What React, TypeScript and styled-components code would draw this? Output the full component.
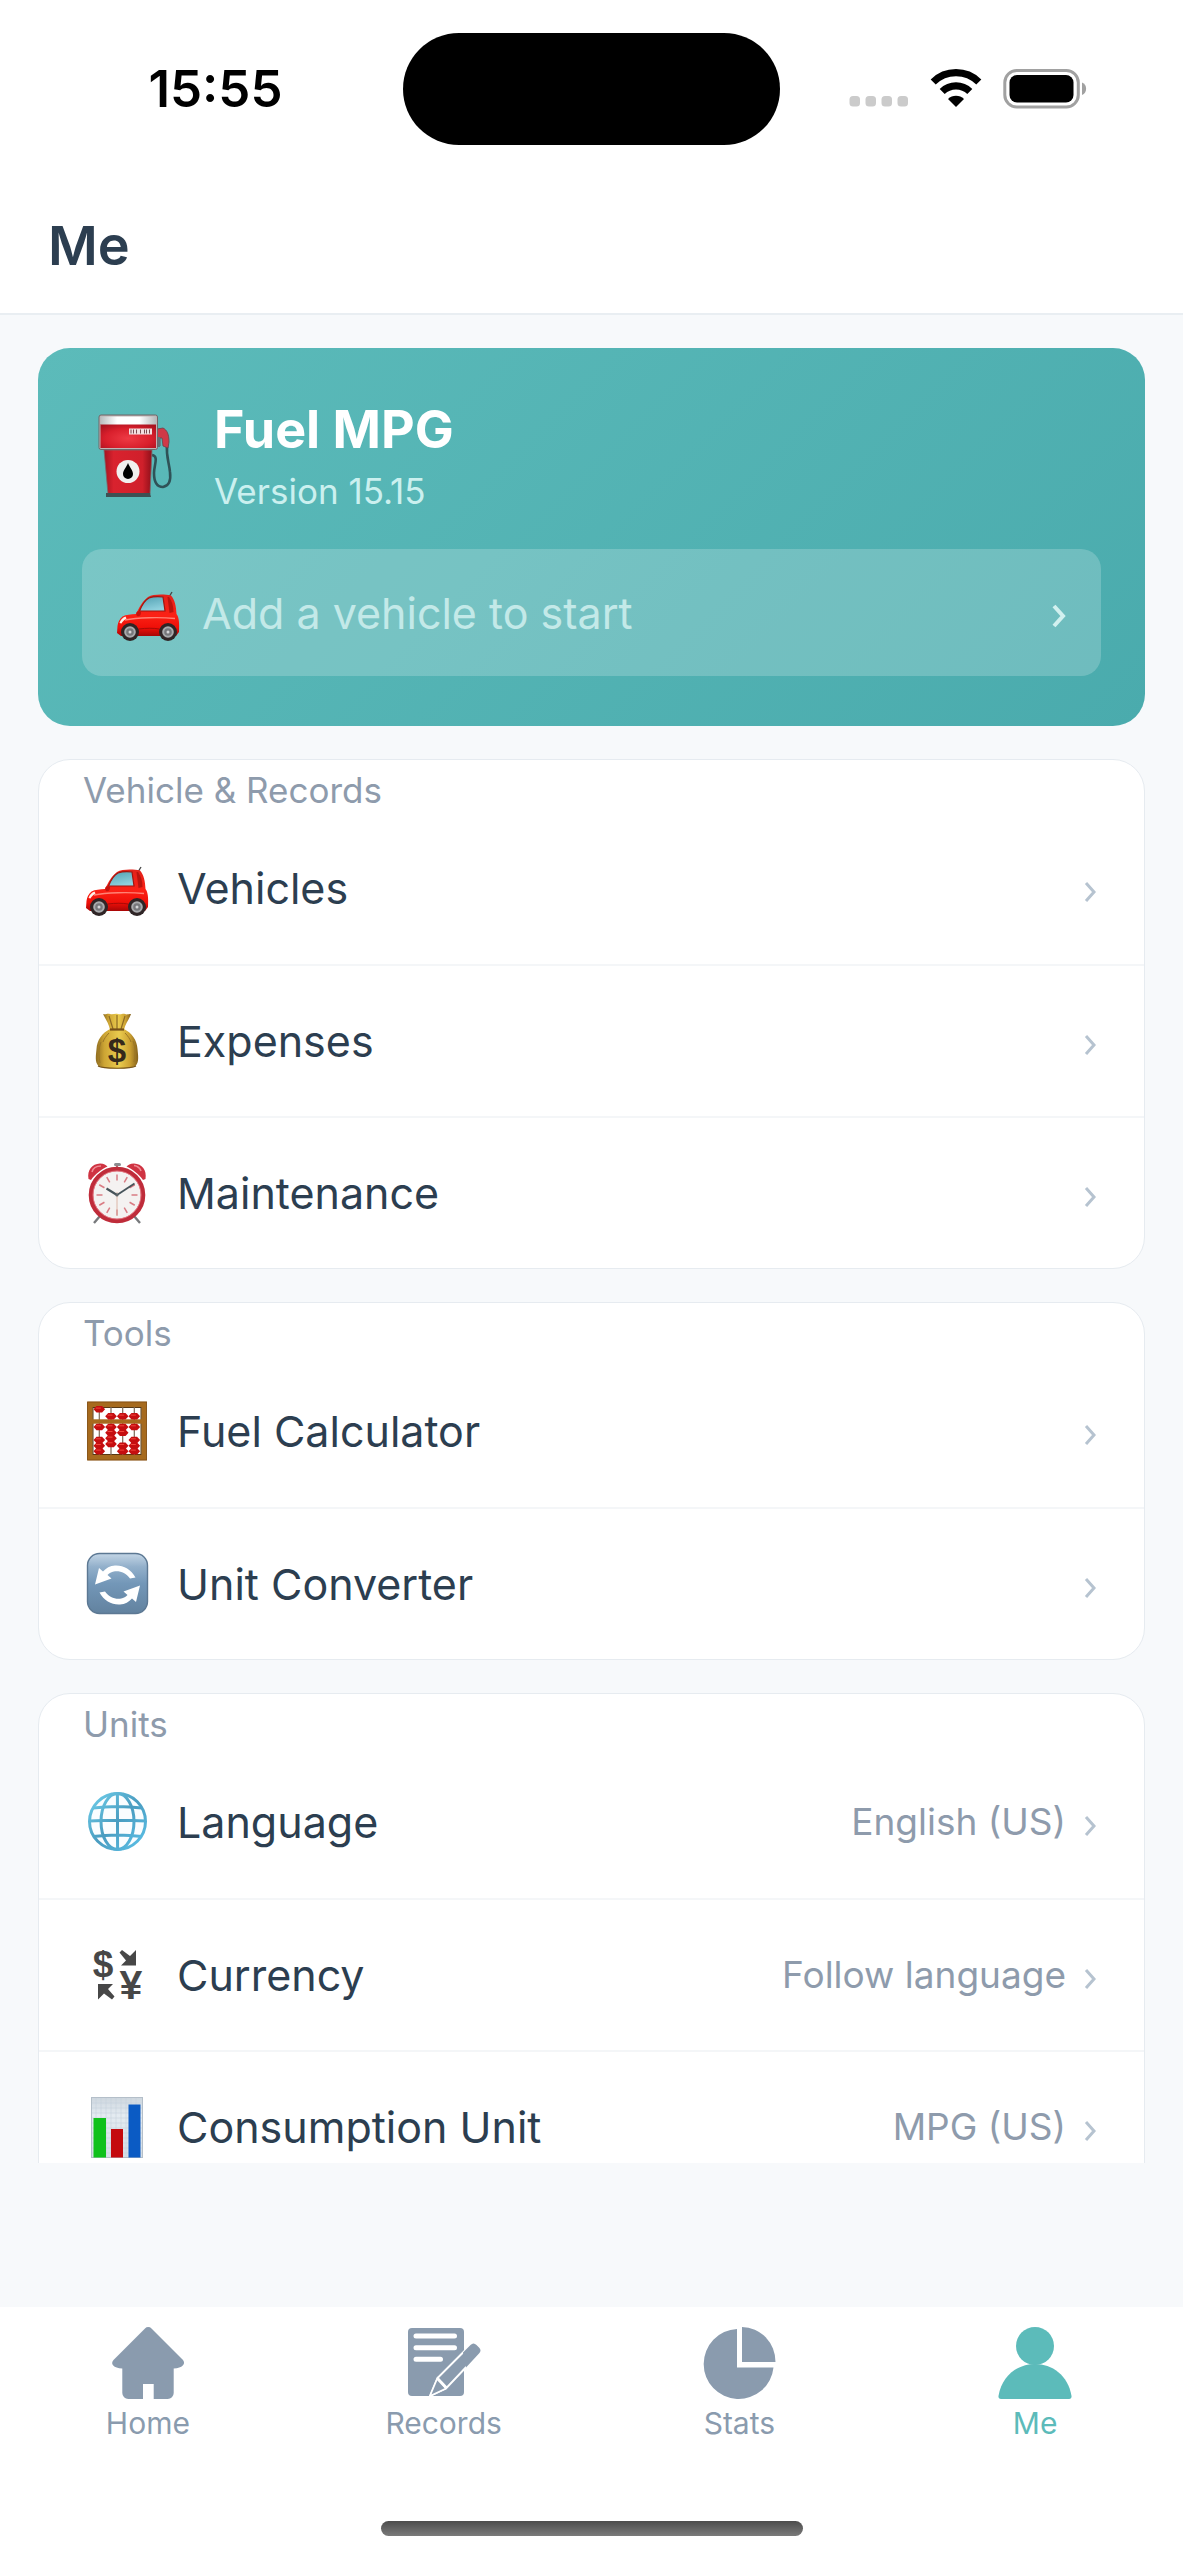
import React from 'react';
import styled, { createGlobalStyle, css } from 'styled-components';

const GlobalStyle = createGlobalStyle`
  *, *::before, *::after { box-sizing: border-box; }
  body {
    margin: 0;
    background: #ffffff;
    color: #2c3e50;
    font-family: Inter, "Liberation Sans", sans-serif;
  }
  button { font: inherit; color: inherit; }
`;

const Screen = styled.div`
  height: 100vh;
  display: flex;
  flex-direction: column;
  background: #f7f9fb;
`;

/* ---------- status bar ---------- */

const StatusBar = styled.div`
  display: grid;
  grid-template-columns: 1fr auto 1fr;
  align-items: center;
  padding: 33px 0;
  background: #ffffff;
`;

const Time = styled.time`
  padding-left: 28px;
  text-align: center;
  color: #000000;
  font-size: 51px;
  line-height: 60px;
  font-weight: 600;
`;

const Island = styled.div`
  width: 377px;
  height: 112px;
  border-radius: 56px;
  background: #000000;
`;

const StatusIcons = styled.div`
  display: flex;
  justify-content: center;
  padding-right: 28px;
`;

/* ---------- header ---------- */

const Header = styled.header`
  display: flex;
  align-items: center;
  height: 137px;
  padding: 0 48px;
  background: #ffffff;
  border-bottom: 2px solid #e9eef2;
`;

const PageTitle = styled.h1`
  margin: 0;
  font-size: 54px;
  line-height: 64px;
  font-weight: 600;
`;

/* ---------- scrolling content ---------- */

const Content = styled.main`
  flex: 1;
  min-height: 0;
  display: flex;
  flex-direction: column;
  gap: 33px;
  padding: 33px 38px 0;
  margin-bottom: 144px;
  overflow-y: auto;
  scrollbar-width: none;

  & > * { flex-shrink: 0; }
`;

const Hero = styled.section`
  padding: 50px 44px;
  border-radius: 32px;
  background: linear-gradient(135deg, #5cbbba 0%, #4aabad 100%);
`;

const AppInfo = styled.div`
  display: flex;
  align-items: center;
  gap: 28px;
  margin-bottom: 29px;
`;

const AppName = styled.h2`
  margin: 0;
  color: #ffffff;
  font-size: 52px;
  line-height: 64px;
  font-weight: 700;
`;

const Version = styled.p`
  margin: 0;
  color: #cbf0ef;
  font-size: 35px;
  line-height: 58px;
`;

const AddVehicle = styled.button`
  display: flex;
  align-items: center;
  gap: 20px;
  width: 100%;
  height: 127px;
  padding: 0 32px;
  border: 0;
  border-radius: 20px;
  background: rgba(255, 255, 255, 0.2);
  color: #c3e9e8;
  font-size: 43px;
  text-align: left;
`;

const Card = styled.section`
  border: 1px solid #e6ebf0;
  border-radius: 32px;
  background: #ffffff;
`;

const CardLabel = styled.h3`
  margin: 0;
  padding: 8px 44px 0;
  color: #8e9bac;
  font-size: 35px;
  line-height: 44px;
  font-weight: 400;
`;

const List = styled.ul`
  margin: 0;
  padding: 0;
  list-style: none;
`;

const Item = styled.li`
  & + & > button { border-top: 2px solid #f4f6f8; }
`;

const RowButton = styled.button`
  display: flex;
  align-items: center;
  gap: 26px;
  width: 100%;
  height: 152px;
  padding: 0 44px;
  border: 0;
  background: none;
  text-align: left;
`;

const RowText = styled.span`
  flex: 1;
  font-size: 43px;
  line-height: 56px;
`;

const Trailing = styled.span`
  display: flex;
  align-items: center;
  gap: 14px;
  color: #8e9bac;
  font-size: 37px;
  line-height: 48px;
`;

const Chevron = styled.svg<{ $large?: boolean }>`
  flex: none;
  width: 20px;
  height: 36px;
  fill: none;
  stroke: ${(p) => (p.$large ? '#d2f0ef' : '#b6c3d0')};
  stroke-width: ${(p) => (p.$large ? 4 : 3)};
`;

const Emoji = styled.svg<{ $size?: number }>`
  flex: none;
  width: ${(p) => p.$size ?? 68}px;
  height: ${(p) => p.$size ?? 68}px;
`;

/* ---------- tab bar ---------- */

const BottomBar = styled.footer`
  display: flex;
  flex-direction: column;
  align-items: center;
  gap: 74px;
  padding: 20px 0 24px;
  background: #ffffff;
`;

const Tabs = styled.nav`
  display: grid;
  grid-template-columns: repeat(4, 1fr);
  width: 100%;
`;

const Tab = styled.a<{ $active?: boolean }>`
  display: flex;
  flex-direction: column;
  align-items: center;
  color: #8a9bae;
  font-size: 30px;
  line-height: 48px;
  text-decoration: none;
  ${(p) => p.$active && css`color: #5cbbba;`}

  svg { width: 72px; height: 72px; fill: currentColor; overflow: visible; }
`;

const HomeIndicator = styled.div`
  width: 422px;
  height: 15px;
  border-radius: 8px;
  background: linear-gradient(#4c4c4c, #7a7a7a);
`;

/* ---------- drawings ---------- */

const Pump = () => (
  <Emoji $size={104} viewBox="0 0 104 104" aria-hidden>
    <defs>
      <radialGradient id="pumpRed" cx="0.5" cy="0.6" r="0.7">
        <stop offset="0" stopColor="#ee3a44" />
        <stop offset="0.6" stopColor="#d91f2c" />
        <stop offset="1" stopColor="#a8121f" />
      </radialGradient>
      <linearGradient id="pumpBody" x1="0" x2="1" y1="0" y2="0">
        <stop offset="0" stopColor="#a3141f" />
        <stop offset="0.2" stopColor="#d9222e" />
        <stop offset="0.8" stopColor="#d0202b" />
        <stop offset="1" stopColor="#8f101a" />
      </linearGradient>
      <linearGradient id="pumpTop" x1="0" x2="1" y1="0" y2="0">
        <stop offset="0" stopColor="#b9bdbf" />
        <stop offset="0.3" stopColor="#ffffff" />
        <stop offset="0.7" stopColor="#ffffff" />
        <stop offset="1" stopColor="#b5b9bb" />
      </linearGradient>
    </defs>
    <path d="M70 48c7 1 2 10 2 18 0 9 3 14 9 14 6-1 8-7 7-15-1-10-4-15-3-28" fill="none" stroke="#2f5257" strokeWidth="2.6" />
    <path d="M75 22l6-1c4 2 6 6 6 14l-1 6-5-2-1-8h-2v8h-3z" fill="#cf3947" stroke="#6b4046" strokeWidth="0.8" />
    <path d="M75 30h3v10h-3z" fill="#5f7376" />
    <path d="M22 43h48l-2 44H26z" fill="url(#pumpBody)" stroke="#7d6468" strokeWidth="0.8" />
    <path d="M24 86h44l1 4H24z" fill="#3d5053" />
    <rect x="17" y="8" width="58.500" height="34.500" rx="2" fill="#c0b4b5" stroke="#6f6669" strokeWidth="1" />
    <rect x="18.500" y="17" width="55.500" height="24" fill="url(#pumpRed)" />
    <rect x="18.500" y="9.500" width="55.500" height="8" fill="url(#pumpTop)" />
    <rect x="47" y="21.500" width="23" height="6" fill="#f2dfe0" />
    <path d="M49 22.500v4m2.500-4v4m3-4v4m4-4v4m4-4v4m2-4v4m3-4v4" stroke="#7a4b50" strokeWidth="1" />
    <circle cx="46" cy="64.500" r="11.500" fill="#f1efee" />
    <path d="M46 56c2 5 5 7.500 5 11a5 5 0 0 1-10 0c0-3.500 3-6 5-11z" fill="#000" />
  </Emoji>
);

const Car = () => (
  <Emoji viewBox="0 0 68 68" aria-hidden>
    <defs>
      <linearGradient id="carRed" x1="0" x2="0" y1="0" y2="1">
        <stop offset="0" stopColor="#e2231b" />
        <stop offset="0.5" stopColor="#fb2115" />
        <stop offset="0.8" stopColor="#ef0f08" />
        <stop offset="1" stopColor="#a80606" />
      </linearGradient>
      <linearGradient id="carGlass" x1="0" x2="0.4" y1="0" y2="1">
        <stop offset="0" stopColor="#4f9fb1" />
        <stop offset="1" stopColor="#8fd0dd" />
      </linearGradient>
    </defs>
    <path d="M55 18l3-5" stroke="#444" strokeWidth="1.300" />
    <path d="M3.500 47c.5-4 2-7 5-9.500C12 35.500 17 35.500 22 35c3-6 6.500-13 12-17 5-3 16-3 23-1.500 4 4.500 5 10.500 5.500 18.500 2.500 3 3 9 2.500 18l-3 4H7l-4-3z" fill="url(#carRed)" />
    <path d="M25.500 32C28 26 31 21 35 19c4-1.500 10-1.500 14-1l2 14z" fill="url(#carGlass)" stroke="#a0150f" strokeWidth="1.200" />
    <path d="M55 18c3 4 4.500 9 4.500 15l-4 1-2-16z" fill="#b9140e" />
    <path d="M5.500 44c1-3 3-5.500 6-6.500l1 2c-2 1-4 3-5 5z" fill="#fff0e8" />
    <path d="M11 41c12-2.500 35-3 50-1.500" stroke="#ff8275" strokeWidth="1.400" fill="none" />
    <path d="M25 50c7-1 15-1 20 0" stroke="#a80906" strokeWidth="1" fill="none" />
    <path d="M27 33c-4-2-6 1-4 4 2 1 4 0 4-4z" fill="#c5130d" />
    <circle cx="16" cy="53" r="9" fill="#2f2526" />
    <circle cx="54" cy="53" r="9" fill="#2f2526" />
    {[16, 54].map((cx) => (
      <g key={cx}>
        <circle cx={cx} cy="53" r="5.800" fill="#a9aaad" />
        <circle cx={cx} cy="53" r="3.800" fill="#77787c" />
        <circle cx={cx} cy="53" r="1.500" fill="#d5d5d8" />
      </g>
    ))}
  </Emoji>
);

const MoneyBag = () => (
  <Emoji viewBox="0 0 68 68" aria-hidden>
    <defs>
      <linearGradient id="bagGold" x1="0" x2="1" y1="0" y2="0">
        <stop offset="0" stopColor="#8f6c1f" />
        <stop offset="0.2" stopColor="#cda534" />
        <stop offset="0.55" stopColor="#eacb4e" />
        <stop offset="0.8" stopColor="#cda232" />
        <stop offset="1" stopColor="#84601b" />
      </linearGradient>
    </defs>
    <path d="M20 7c3 1 4-1 7 0s5-1 8 0 5-1 7 0 3 0 6 0c-2 6-6 10-7 16H27C26 17 23 13 20 7z" fill="url(#bagGold)" />
    <path d="M26 9l4 13M34 8v14M42 9l-4 13" stroke="#8c6a24" strokeWidth="1.200" />
    <path d="M27 22h14c8 4 13 11 13.500 20 .5 6 2 13-2 17-5 3.500-32 3.500-37 0-4-4-2.500-11-2-17C14 33 19 26 27 22z" fill="url(#bagGold)" />
    <path d="M18 35c-3 8-2 15-1 21M50 34c3 8 2 15 1 21M26 26c-3 3-5 6-6 9M42 26c3 3 5 6 6 9" stroke="#9b7626" strokeWidth="1" fill="none" />
    <path d="M15 59c5 3 33 3 38 0" stroke="#76541a" strokeWidth="1.200" fill="none" />
    <path d="M27 22.500h14" stroke="#765019" strokeWidth="2.200" />
    <text x="34" y="55" textAnchor="middle" fontFamily="Liberation Sans, sans-serif" fontSize="33" fontWeight="700" fill="#35291b">$</text>
  </Emoji>
);

const AlarmClock = () => (
  <Emoji viewBox="0 0 68 68" aria-hidden>
    <path d="M17 57l-6 7M51 57l6 7" stroke="#77797c" strokeWidth="2.400" />
    <rect x="31" y="4" width="7" height="3" rx="1.500" fill="#8b8d90" />
    <path d="M34 6v5M21 14l4 4M47 14l-4 4" stroke="#a27a7d" strokeWidth="2" />
    <path d="M5.500 20C4 11 9 5 17 4.500c4 0 6 1.500 7.500 3C19 10 12 15 8 21z" fill="#cf3342" />
    <path d="M62.500 20C64 11 59 5 51 4.500c-4 0-6 1.500-7.500 3C49 10 56 15 60 21z" fill="#cf3342" />
    <path d="M9 13c1-4 5-6 9-6M58 12c-1-3-4-5-7-5.500" stroke="#f08b94" strokeWidth="1.600" fill="none" />
    <circle cx="34" cy="36" r="26" fill="#f4f2f1" stroke="#bf2c3a" strokeWidth="4.600" />
    <circle cx="34" cy="36" r="24" fill="none" stroke="#e8808a" strokeWidth="0.8" />
    {Array.from({ length: 12 }, (_, i) => (
      <path key={i} d="M34 15.500v6" transform={`rotate(${i * 30} 34 36)`} stroke="#d97b83" strokeWidth="1.500" />
    ))}
    <path d="M34 33v24" stroke="#d9b0a0" strokeWidth="0.9" />
    <path d="M34 36L23.500 29.500" stroke="#46545a" strokeWidth="2.200" />
    <path d="M34 36l17.500-11.500" stroke="#46545a" strokeWidth="1.800" />
    <circle cx="34" cy="36" r="1.500" fill="#5a6468" />
  </Emoji>
);

const beadColumns: Array<[number, number[]]> = [
  [16.3, [12.3, 30, 43, 48.7, 54.3]],
  [28, [19.3, 30, 35.7, 41.3, 47]],
  [39.7, [19.3, 30, 35.7, 48.7, 54.3]],
  [51.3, [19.3, 30, 43, 48.7, 54.3]],
];

const Abacus = () => (
  <Emoji viewBox="0 0 68 68" aria-hidden>
    <rect x="7" y="7.500" width="54" height="53" fill="#fff" stroke="#a66a1e" strokeWidth="5.600" />
    <rect x="4.600" y="5" width="59" height="58" fill="none" stroke="#7f4c12" strokeWidth="0.8" />
    <rect x="10" y="10.500" width="48" height="47" fill="none" stroke="#573812" strokeWidth="1" />
    {beadColumns.map(([x]) => (
      <path key={x} d={`M${x} 10v48`} stroke="#7c6a59" strokeWidth="1.200" />
    ))}
    <rect x="9" y="22.300" width="50" height="4.400" fill="#a66a1e" />
    {beadColumns.map(([x, ys]) =>
      ys.map((y) => (
        <g key={`${x}-${y}`}>
          <path d={`M${x - 5.8} ${y}l3-3.200h5.600l3 3.200-3 3.200h-5.600z`} fill="#c50e10" />
          <path d={`M${x - 3.500} ${y - 1.200}h5`} stroke="#f1453c" strokeWidth="1" />
        </g>
      )),
    )}
  </Emoji>
);

const Converter = () => (
  <Emoji viewBox="0 0 68 68" aria-hidden>
    <defs>
      <linearGradient id="convBlue" x1="0" x2="0" y1="0" y2="1">
        <stop offset="0" stopColor="#c4d6e6" />
        <stop offset="0.22" stopColor="#93b0cb" />
        <stop offset="0.5" stopColor="#7397b8" />
        <stop offset="1" stopColor="#62829f" />
      </linearGradient>
    </defs>
    <rect x="4.500" y="3.500" width="60" height="60" rx="12" fill="url(#convBlue)" stroke="#5c7893" strokeWidth="1.400" />
    {[0, 180].map((turn) => (
      <g key={turn} transform={`rotate(${turn} 34.500 35)`}>
        <path d="M52.500 27.500C48 19 40 15 32 15.500c-5 .3-9 2.500-12 6l-4-3.500-4 16.500 16.500-6-4-3.500c2-2 4.500-3.500 7.500-3.700 6-.5 11 2 15 7.200z" fill="#fff" />
      </g>
    ))}
  </Emoji>
);

const Globe = () => (
  <Emoji viewBox="0 0 68 68" aria-hidden>
    <defs>
      <linearGradient id="globeBlue" gradientUnits="userSpaceOnUse" x1="6" x2="62" y1="6" y2="62">
        <stop offset="0" stopColor="#6fd0ec" />
        <stop offset="0.5" stopColor="#4a9cc0" />
        <stop offset="1" stopColor="#5cc3ea" />
      </linearGradient>
    </defs>
    <g fill="none" stroke="url(#globeBlue)" strokeWidth="3">
      <circle cx="34.500" cy="33.500" r="28" fill="#fafdff" />
      <ellipse cx="34.500" cy="33.500" rx="16.500" ry="28" />
      <path d="M34.400 5l.2 57M10 20c16-2 33-2 49 0M6 33c19-1 38-1 57 0M10 48.500c16-2 33-2 49 0" />
    </g>
  </Emoji>
);

const CurrencySymbols = () => (
  <Emoji viewBox="0 0 68 68" aria-hidden fill="#474747">
    <g fontFamily="Liberation Sans, sans-serif" fontWeight="700" textAnchor="middle">
      <text x="20" y="36" fontSize="37">$</text>
      <text x="48" y="58" fontSize="41">¥</text>
    </g>
    <path d="M53 9v15.500H38l5-5-6.500-8L39 9l8 6z" />
    <path d="M15 58.500V43h15l-5 5 6.500 7.500-2.500 3-8-6z" />
  </Emoji>
);

const BarChart = () => (
  <Emoji viewBox="0 0 68 68" aria-hidden>
    <defs>
      <linearGradient id="chartPaper" x1="0" x2="0" y1="0" y2="1">
        <stop offset="0" stopColor="#cdd6de" />
        <stop offset="0.3" stopColor="#e4ebf1" />
        <stop offset="1" stopColor="#d5dee6" />
      </linearGradient>
    </defs>
    <rect x="8" y="4" width="52" height="61" fill="url(#chartPaper)" />
    <path d="M13 5v59M18 5v59M23 5v59M28 5v59M33 5v59M38 5v59M43 5v59M48 5v59M53 5v59M9 10h50M9 15h50M9 20h50M9 25h50M9 30h50M9 35h50M9 40h50M9 45h50M9 50h50M9 55h50M9 60h50" stroke="#c3ced8" strokeWidth="0.500" />
    <rect x="8.500" y="4.500" width="51" height="60" fill="none" stroke="#b4bfc9" />
    <rect x="10.500" y="25" width="12.500" height="39.500" fill="#0fc11b" />
    <rect x="28" y="36" width="12" height="28.500" fill="#c40a0e" />
    <rect x="45.500" y="11.500" width="12" height="53" fill="#0b5bc4" />
  </Emoji>
);

const StatusGlyphs = () => (
  <svg width="238" height="40" viewBox="0 0 238 40" aria-hidden>
    {[0, 16, 32, 48].map((x) => (
      <rect key={x} x={x + 0.5} y="27" width="10.500" height="10.500" rx="3.500" fill="#cbcbcb" />
    ))}
    <g transform="translate(107 0)" fill="none" stroke="#000" strokeWidth="7.200">
      <path d="M-22.800 13A32.500 32.500 0 0 1 22.800 13" />
      <path d="M-13.800 22.500A19.800 19.800 0 0 1 13.800 22.500" />
      <path d="M0 38l-8-8a11.500 11.500 0 0 1 16 0z" fill="#000" stroke="none" />
    </g>
    <rect x="155.800" y="1.500" width="73.500" height="36.500" rx="12" fill="none" stroke="#a1a1a1" strokeWidth="3" />
    <rect x="160.500" y="6" width="64" height="27.500" rx="7.500" fill="#000" />
    <path d="M233 13.500c5.500 2 5.500 10.500 0 12.500z" fill="#a1a1a1" />
  </svg>
);

const HomeIcon = () => (
  <svg viewBox="0 0 72 72" aria-hidden>
    <path d="M33 1.500a4.500 4.500 0 0 1 6.500 0L71 33c3 4-.5 8-9.300 8.500V66a6 6 0 0 1-6 6H41.700V57H31v15H16.300a6 6 0 0 1-6-6V41.500C1.500 41-2 37 1.500 33z" />
  </svg>
);

const RecordsIcon = () => (
  <svg viewBox="0 0 72 72" aria-hidden>
    <rect x="0" y="1" width="56" height="68" rx="4" />
    <path d="M8 9h38.500M8 20.700h38.500M8 32.300h24.500" stroke="#fff" strokeWidth="5" strokeLinecap="round" />
    <path d="M22 69l7.500-18L62 18.500c2.500-2.500 4-2 6 0l2.500 2.500c2 2 2 4 0 6L38 61.500z" stroke="#fff" strokeWidth="2" />
    <path d="M55 25.500L62.500 18c2-2 4-2 6 0l2.500 2.500c2 2 2 4 0 6L58 40.500z" />
    <path d="M22 69l7.500-18 8.500 10.500z" stroke="#fff" strokeWidth="1.500" />
    <path d="M29.500 51.500l9 9.500" stroke="#fff" strokeWidth="3" />
  </svg>
);

const StatsIcon = () => (
  <svg viewBox="0 0 72 72" aria-hidden>
    <path d="M34 2v38.500h36.500A35 35 0 1 1 34 2z" />
    <path d="M39 0a33.500 35 0 0 1 33.500 35H39z" />
  </svg>
);

const MeIcon = () => (
  <svg viewBox="0 0 72 72" aria-hidden>
    <circle cx="36" cy="19" r="19" />
    <path d="M36 37C53 37 69 48 72.500 69c.2 2-.5 3-2.500 3H2c-2 0-2.700-1-2.500-3C3 48 19 37 36 37z" />
  </svg>
);

const ChevronRight = ({ large }: { large?: boolean }) => (
  <Chevron $large={large} viewBox="0 0 20 36" aria-hidden>
    <path d={large ? 'M5 11l9 10-9 10' : 'M6 13l8 9-8 9'} />
  </Chevron>
);

/* ---------- data ---------- */

type Entry = { icon: React.ComponentType; label: string; value?: string };

const groups: Array<{ title: string; entries: Entry[] }> = [
  {
    title: 'Vehicle & Records',
    entries: [
      { icon: Car, label: 'Vehicles' },
      { icon: MoneyBag, label: 'Expenses' },
      { icon: AlarmClock, label: 'Maintenance' },
    ],
  },
  {
    title: 'Tools',
    entries: [
      { icon: Abacus, label: 'Fuel Calculator' },
      { icon: Converter, label: 'Unit Converter' },
    ],
  },
  {
    title: 'Units',
    entries: [
      { icon: Globe, label: 'Language', value: 'English (US)' },
      { icon: CurrencySymbols, label: 'Currency', value: 'Follow language' },
      { icon: BarChart, label: 'Consumption Unit', value: 'MPG (US)' },
    ],
  },
];

const tabs = [
  { icon: HomeIcon, label: 'Home' },
  { icon: RecordsIcon, label: 'Records' },
  { icon: StatsIcon, label: 'Stats' },
  { icon: MeIcon, label: 'Me', active: true },
];

export default function App() {
  return (
    <Screen>
      <GlobalStyle />
      <StatusBar>
        <Time>15:55</Time>
        <Island />
        <StatusIcons>
          <StatusGlyphs />
        </StatusIcons>
      </StatusBar>
      <Header>
        <PageTitle>Me</PageTitle>
      </Header>
      <Content>
        <Hero>
          <AppInfo>
            <Pump />
            <div>
              <AppName>Fuel MPG</AppName>
              <Version>Version 15.15</Version>
            </div>
          </AppInfo>
          <AddVehicle type="button">
            <Car />
            <RowText>Add a vehicle to start</RowText>
            <ChevronRight large />
          </AddVehicle>
        </Hero>
        {groups.map((group) => (
          <Card key={group.title}>
            <CardLabel>{group.title}</CardLabel>
            <List>
              {group.entries.map(({ icon: Icon, label, value }) => (
                <Item key={label}>
                  <RowButton type="button">
                    <Icon />
                    <RowText>{label}</RowText>
                    <Trailing>
                      {value && <span>{value}</span>}
                      <ChevronRight />
                    </Trailing>
                  </RowButton>
                </Item>
              ))}
            </List>
          </Card>
        ))}
      </Content>
      <BottomBar>
        <Tabs>
          {tabs.map(({ icon: Icon, label, active }) => (
            <Tab key={label} href={`#${label.toLowerCase()}`} $active={active} aria-current={active ? 'page' : undefined}>
              <Icon />
              {label}
            </Tab>
          ))}
        </Tabs>
        <HomeIndicator />
      </BottomBar>
    </Screen>
  );
}
